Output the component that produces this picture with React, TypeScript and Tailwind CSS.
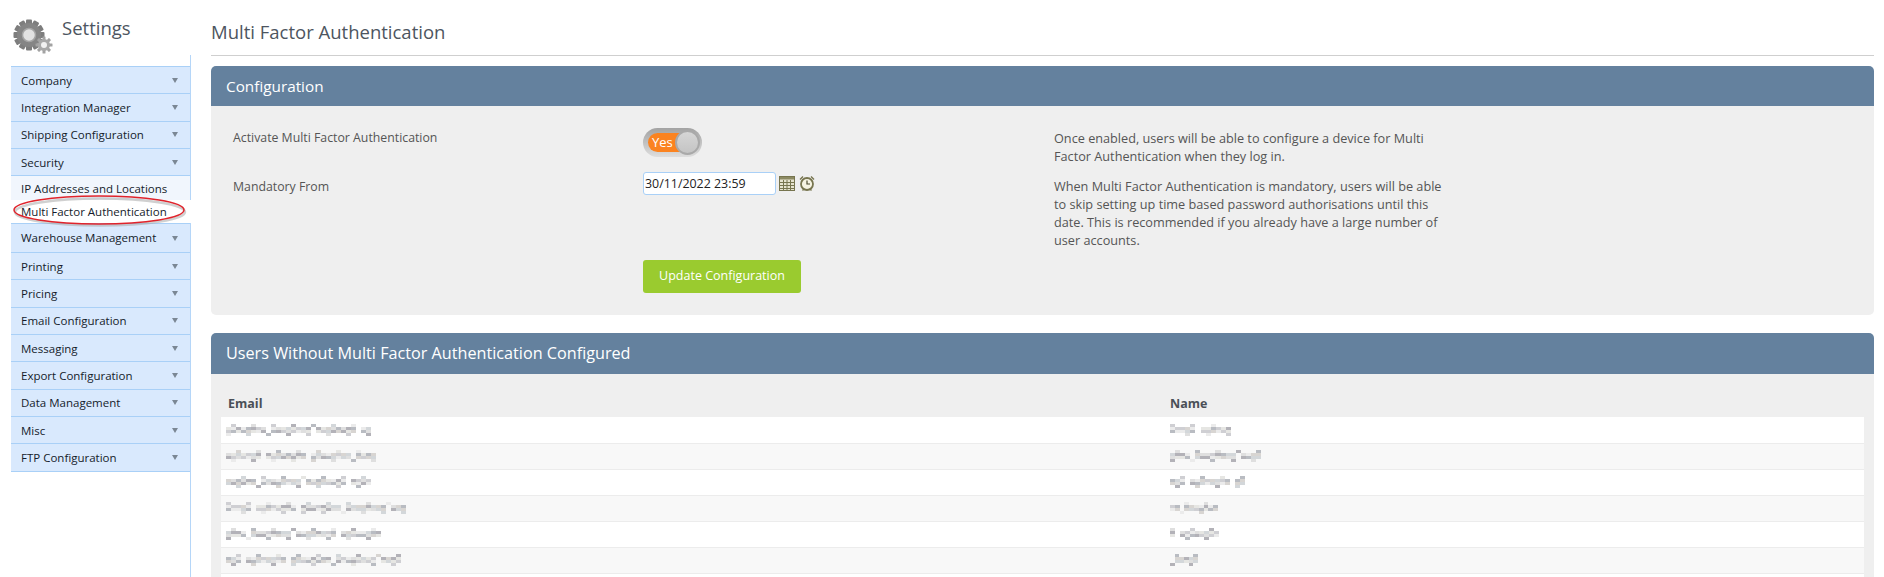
const menuTop = [
  { label: "Company", h: "h-[27.33px]" },
  { label: "Integration Manager", h: "h-[27.33px]" },
  { label: "Shipping Configuration", h: "h-[27.33px]" },
  { label: "Security", h: "h-[27.34px]" },
];

const menuBottom = [
  "Printing",
  "Pricing",
  "Email Configuration",
  "Messaging",
  "Export Configuration",
  "Data Management",
  "Misc",
  "FTP Configuration",
];

// blurred out in the screenshot, widths are what's left of the originals
const users = [
  { email: 145, name: 61 },
  { email: 150, name: 91 },
  { email: 145, name: 75 },
  { email: 180, name: 48 },
  { email: 155, name: 54 },
  { email: 175, name: 28 },
];

const shades = ["#cfcfd3", "#dfdfdf", "#b9bcc2", "#e6e6e3", "#d3d7da", "#ebebeb", "#b3b2b8", "#d8d5d2"];

function Smudge({ width, seed }: { width: number; seed: number }) {
  const cols = Math.round(width / 5);
  const cells = [];
  for (let row = 0; row < 4; row++) {
    for (let col = 0; col < cols; col++) {
      const n = (col * 7 + row * 13 + seed * 11 + ((col * col + seed) % 5) * 3) % shades.length;
      const edge = row === 0 || row === 3;
      const hole = edge ? (col * 3 + seed + row) % 4 !== 0 : (col + seed) % 9 === 0;
      cells.push(
        <span key={row + "-" + col} style={{ background: hole ? "transparent" : shades[n] }} />
      );
    }
  }
  return (
    <div
      aria-hidden="true"
      className="grid h-[12px] auto-rows-[3px] blur-[0.6px]"
      style={{ width, gridTemplateColumns: `repeat(${cols}, 1fr)` }}
    >
      {cells}
    </div>
  );
}

function Arrow() {
  return <span className="h-0 w-0 border-x-[3px] border-t-[5px] border-x-transparent border-t-[#7b8794]" />;
}

function MenuRow({ label, h }: { label: string; h: string }) {
  return (
    <div
      className={`flex ${h} items-center justify-between border-t border-[#a9d0f7] bg-[#d9e9fd] pl-[10px] pr-[12px] text-[11.5px] font-medium text-[#151c2b]`}
    >
      <span>{label}</span>
      <Arrow />
    </div>
  );
}

function GearIcon() {
  const big = [0, 30, 60, 90, 120, 150];
  const small = [0, 45, 90, 135];
  return (
    <svg width="41" height="36" viewBox="0 0 41 36" className="shrink-0">
      <g fill="#7d7d7d">
        {big.map((a) => (
          <rect key={a} x="14" y="0.5" width="6" height="31" rx="1" transform={`rotate(${a} 17 16)`} />
        ))}
      </g>
      <circle cx="17" cy="16" r="12" fill="#858585" />
      <circle cx="17" cy="16" r="6.5" fill="#e2e2e2" />
      <circle cx="17" cy="16" r="6.5" fill="none" stroke="#a5a5a5" strokeWidth="1.5" />
      <g fill="#a3a3a3">
        {small.map((a) => (
          <rect key={a} x="30.5" y="17.5" width="3" height="17" rx="0.5" transform={`rotate(${a} 32 26)`} />
        ))}
      </g>
      <circle cx="32" cy="26" r="6" fill="#a8a8a8" />
      <circle cx="32" cy="26" r="3" fill="#f2f2f2" />
    </svg>
  );
}

function CalendarIcon() {
  return (
    <svg width="16" height="15" viewBox="0 0 16 15" className="shrink-0">
      <rect x="0.5" y="0.5" width="15" height="14" fill="#e6e3cf" stroke="#77754f" />
      <rect x="1" y="1" width="14" height="2.5" fill="#8c8a62" />
      <path d="M1 6.5h14M1 9.5h14M1 12.5h14M4.5 4v10M8 4v10M11.5 4v10" stroke="#77754f" strokeWidth="1" fill="none" />
    </svg>
  );
}

function ClockIcon() {
  return (
    <svg width="16" height="17" viewBox="0 0 16 17" className="shrink-0">
      <path d="M1 4.5 4 1.5M15 4.5 12 1.5M3.5 15.5l1.5-1.5M12.5 15.5 11 14" stroke="#77754f" strokeWidth="1.4" fill="none" />
      <circle cx="8" cy="9" r="6" fill="#f5f3e3" stroke="#77754f" strokeWidth="1.8" />
      <path d="M8 5.5V9h3" stroke="#4d4b30" strokeWidth="1.2" fill="none" />
    </svg>
  );
}

function Toggle() {
  return (
    <div className="relative h-[29px] w-[59px] rounded-full bg-gradient-to-b from-[#a3a3a3] to-[#dedede] p-[5px]">
      <div className="flex h-[19px] w-[44px] items-center rounded-l-full bg-[#fb8320] pl-[4px] text-[13px] leading-none text-white">
        Yes
      </div>
      <div className="absolute right-[2px] top-[2px] h-[25px] w-[25px] rounded-full border-2 border-[#a9a9a9] bg-gradient-to-b from-[#d6d6d6] to-[#c4c4c4]" />
    </div>
  );
}

export default function App() {
  return (
    <div className="flex h-[577px] w-full overflow-hidden bg-white font-['Open_Sans',sans-serif] text-[#555]">
      <aside className="relative ml-[11px] flex w-[180px] shrink-0 flex-col">
        <div className="flex h-[55px] shrink-0 items-start gap-[9px] pl-[1px] pt-[19px]">
          <GearIcon />
          <span className="-mt-[3px] text-[18.5px] leading-[24px] text-[#4d5560]">Settings</span>
        </div>
        <nav className="flex-1 border-r border-[#b5d6f8] pt-[11px]">
          {menuTop.map((m) => (
            <MenuRow key={m.label} label={m.label} h={m.h} />
          ))}
          <div className="flex h-[24.7px] items-center border-t border-[#a9d0f7] bg-[#f1f6fd] pl-[10px] text-[11.5px] font-medium text-[#151c2b]">
            IP Addresses and Locations
          </div>
          <div className="-mr-px flex h-[23px] items-center bg-white pl-[10px] text-[11.5px] font-medium text-[#151c2b]">
            Multi Factor Authentication
          </div>
          <MenuRow label="Warehouse Management" h="h-[29px]" />
          {menuBottom.map((m) => (
            <MenuRow key={m} label={m} h="h-[27.33px]" />
          ))}
          <div className="border-t border-[#a9d0f7]" />
        </nav>
        <svg width="178" height="36" viewBox="0 0 178 36" fill="none" className="absolute left-[1px] top-[193px]">
          <ellipse cx="88" cy="19" rx="85" ry="13.5" stroke="#a9a9a9" strokeWidth="2.5" opacity="0.55" />
          <ellipse cx="87" cy="17" rx="85" ry="14" stroke="#e0232b" strokeWidth="1.5" />
        </svg>
      </aside>

      <main className="ml-[20px] mr-[10px] min-w-0 flex-1">
        <div className="flex h-[56px] items-end border-b border-[#cfcfcf] pb-[8px]">
          <h1 className="text-[18.5px] leading-[30px] font-normal text-[#4d5560]">Multi Factor Authentication</h1>
        </div>

        <section className="mt-[10px]">
          <div className="flex h-[40px] items-center rounded-t-[5px] bg-[#64819e] pl-[15px] text-[15.3px] text-white">
            Configuration
          </div>
          <div className="flex rounded-b-[5px] bg-[#efefef] pb-[22px] pt-[22px]">
            <div className="w-[432px] shrink-0 pl-[22px] text-[12.3px] leading-[20px] text-[#555]">
              <div>Activate Multi Factor Authentication</div>
              <div className="mt-[29px]">Mandatory From</div>
            </div>
            <div className="w-[411px] shrink-0">
              <Toggle />
              <div className="mt-[15px] flex items-center">
                <input
                  readOnly
                  value="30/11/2022 23:59"
                  className="h-[23px] w-[133px] rounded-[3px] border border-[#a9d0f7] bg-white pl-px text-[12.4px] text-[#222] outline-none"
                />
                <span className="ml-[3px]">
                  <CalendarIcon />
                </span>
                <span className="ml-[4px]">
                  <ClockIcon />
                </span>
              </div>
              <button className="mt-[65px] h-[33px] w-[158px] rounded-[3px] bg-[#9acb2f] text-[12.5px] text-white">
                Update Configuration
              </button>
            </div>
            <div className="w-[392px] shrink-0 text-[12.7px] leading-[18px] text-[#555]">
              <p className="mt-px">Once enabled, users will be able to configure a device for Multi Factor Authentication when they log in.</p>
              <p className="mt-[12px]">
                When Multi Factor Authentication is mandatory, users will be able to skip setting up time based password authorisations until this date. This is recommended if you already have a large number of user accounts.
              </p>
            </div>
          </div>
        </section>

        <section className="mt-[18px]">
          <div className="flex h-[41px] items-center rounded-t-[5px] bg-[#64819e] pl-[15px] text-[16.2px] text-white">
            Users Without Multi Factor Authentication Configured
          </div>
          <div className="bg-[#efefef] px-[10px] pb-[20px] pt-[20px]">
            <table className="w-full table-fixed border-collapse text-[13px]">
              <thead>
                <tr className="h-[23px] text-left text-[#4a4f57]">
                  <th className="w-[942px] pb-[3px] pl-[7px] text-[12.5px] font-bold">Email</th>
                  <th className="pb-[3px] pl-[7px] text-[12.5px] font-bold">Name</th>
                </tr>
              </thead>
              <tbody>
                {users.map((u, i) => (
                  <tr key={i} className={`h-[26px] border-b border-[#ececec] ${i % 2 === 0 ? "bg-white" : "bg-[#f8f8f8]"}`}>
                    <td className="pl-[5px] align-middle">
                      <Smudge width={u.email} seed={i + 1} />
                    </td>
                    <td className="pl-[7px] align-middle">
                      <Smudge width={u.name} seed={i + 4} />
                    </td>
                  </tr>
                ))}
                <tr className="h-[26px] bg-white">
                  <td />
                  <td />
                </tr>
              </tbody>
            </table>
          </div>
        </section>
      </main>
    </div>
  );
}
